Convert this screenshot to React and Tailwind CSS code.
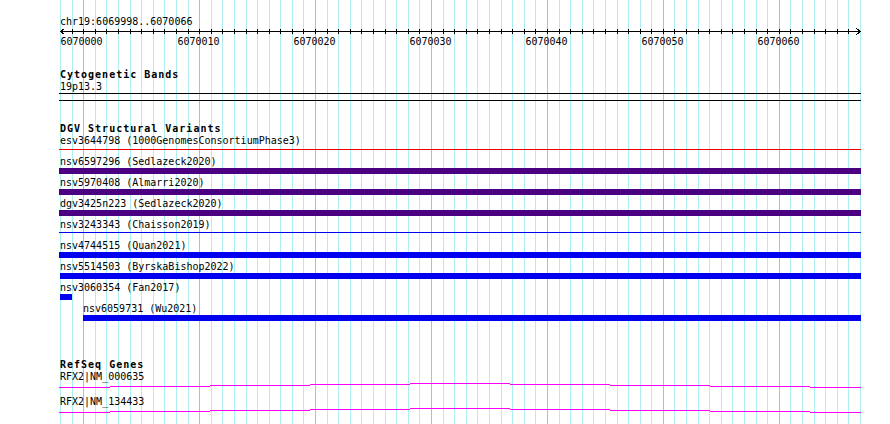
import React from "react";

const PX = 800 / 69;
const gridXs = Array.from({ length: 70 }, (_, k) => Math.round(60 + k * PX));

function Grid() {
  return (
    <svg
      className="absolute left-0 top-0"
      width="890"
      height="424"
      shapeRendering="crispEdges"
    >
      {gridXs.map((x, k) => (
        <rect
          key={k}
          x={x}
          y={0}
          width={1}
          height={424}
          fill={k % 10 === 2 ? "#93c6ee" : "#aeeef0"}
        />
      ))}
    </svg>
  );
}

function Ruler() {
  const labels = [0, 10, 20, 30, 40, 50, 60];
  return (
    <svg className="block" width="890" height="20" shapeRendering="crispEdges">
      <rect x={60} y={4} width={801} height={1} fill="#000" />
      {gridXs.slice(1, 69).map((x, i) => (
        <rect key={i} x={x} y={2} width={1} height={5} fill="#000" />
      ))}
      <polyline points="64.5,1.5 60.5,4.5 64.5,7.5" fill="none" stroke="#000" strokeWidth="1" />
      <polyline points="856.5,1.5 860.5,4.5 856.5,7.5" fill="none" stroke="#000" strokeWidth="1" />
      {labels.map((d, i) => (
        <text
          key={d}
          x={i === 0 ? 81.5 : gridXs[2 + d] - 0.5}
          y={18}
          textAnchor="middle"
          fontFamily="'DejaVu Sans Mono', monospace"
          fontSize="10"
          fill="#000"
        >
          {6070000 + d}
        </text>
      ))}
    </svg>
  );
}

function GeneLine() {
  const segs = [
    [0, 51, 5],
    [51, 151, 4],
    [151, 251, 3],
    [251, 351, 2],
    [351, 451, 1],
    [451, 551, 2],
    [551, 651, 3],
    [651, 751, 4],
    [751, 802, 5],
  ];
  return (
    <svg className="block ml-[59px]" width="802" height="14" shapeRendering="crispEdges">
      {segs.map(([a, b, y], i) => (
        <rect key={i} x={a} y={y} width={b - a} height={1} fill="#ff00ff" />
      ))}
    </svg>
  );
}

function Row({ label, labelClass, children }) {
  return (
    <div className="h-[21px]">
      <div className={labelClass}>{label}</div>
      {children}
    </div>
  );
}

export default function App() {
  return (
    <div className="relative w-[890px] h-[424px] overflow-hidden bg-white">
      <Grid />
      <div className="relative flex flex-col font-['DejaVu_Sans_Mono',monospace] text-[10px] leading-[11px] text-black whitespace-pre">
        <div className="pt-[16px] pl-[60px] h-[27px]">chr19:6069998..6070066</div>
        <Ruler />

        <div className="mt-[22px] pl-[60px] font-bold tracking-[1px]">Cytogenetic Bands</div>
        <div className="mt-px pl-[60px]">19p13.3</div>
        <div className="mt-px ml-[59px] w-[802px] h-px bg-black" />
        <div className="mt-[6px] ml-[59px] w-[802px] h-px bg-black" />

        <div className="mt-[22px] pl-[60px] font-bold tracking-[1px]">DGV Structural Variants</div>
        <div className="mt-px flex flex-col">
          <Row label="esv3644798 (1000GenomesConsortiumPhase3)" labelClass="pl-[60px]">
            <div className="mt-[3px] ml-[59px] w-[802px] h-px bg-[#ee0000]" />
          </Row>
          <Row label="nsv6597296 (Sedlazeck2020)" labelClass="pl-[60px]">
            <div className="mt-px ml-[59px] w-[802px] h-[6px] bg-[#4b0082]" />
          </Row>
          <Row label="nsv5970408 (Almarri2020)" labelClass="pl-[60px]">
            <div className="mt-px ml-[59px] w-[802px] h-[6px] bg-[#4b0082]" />
          </Row>
          <Row label="dgv3425n223 (Sedlazeck2020)" labelClass="pl-[60px]">
            <div className="mt-px ml-[59px] w-[802px] h-[6px] bg-[#4b0082]" />
          </Row>
          <Row label="nsv3243343 (Chaisson2019)" labelClass="pl-[60px]">
            <div className="mt-[2px] ml-[59px] w-[802px] h-px bg-[#0000ee]" />
          </Row>
          <Row label="nsv4744515 (Quan2021)" labelClass="pl-[60px]">
            <div className="mt-px ml-[59px] w-[802px] h-[6px] bg-[#0000ee]" />
          </Row>
          <Row label="nsv5514503 (ByrskaBishop2022)" labelClass="pl-[60px]">
            <div className="mt-px ml-[60px] w-[801px] h-[6px] bg-[#0000ee]" />
          </Row>
          <Row label="nsv3060354 (Fan2017)" labelClass="pl-[60px]">
            <div className="mt-px ml-[60px] w-[12px] h-[6px] bg-[#0000ee]" />
          </Row>
          <Row label="nsv6059731 (Wu2021)" labelClass="pl-[83px]">
            <div className="mt-px ml-[83px] w-[778px] h-[6px] bg-[#0000ee]" />
          </Row>
        </div>

        <div className="mt-[35px] pl-[60px] font-bold tracking-[1px]">RefSeq Genes</div>
        <div className="mt-px pl-[60px]">RFX2|NM_000635</div>
        <GeneLine />
        <div className="pl-[60px]">RFX2|NM_134433</div>
        <GeneLine />
      </div>
    </div>
  );
}
